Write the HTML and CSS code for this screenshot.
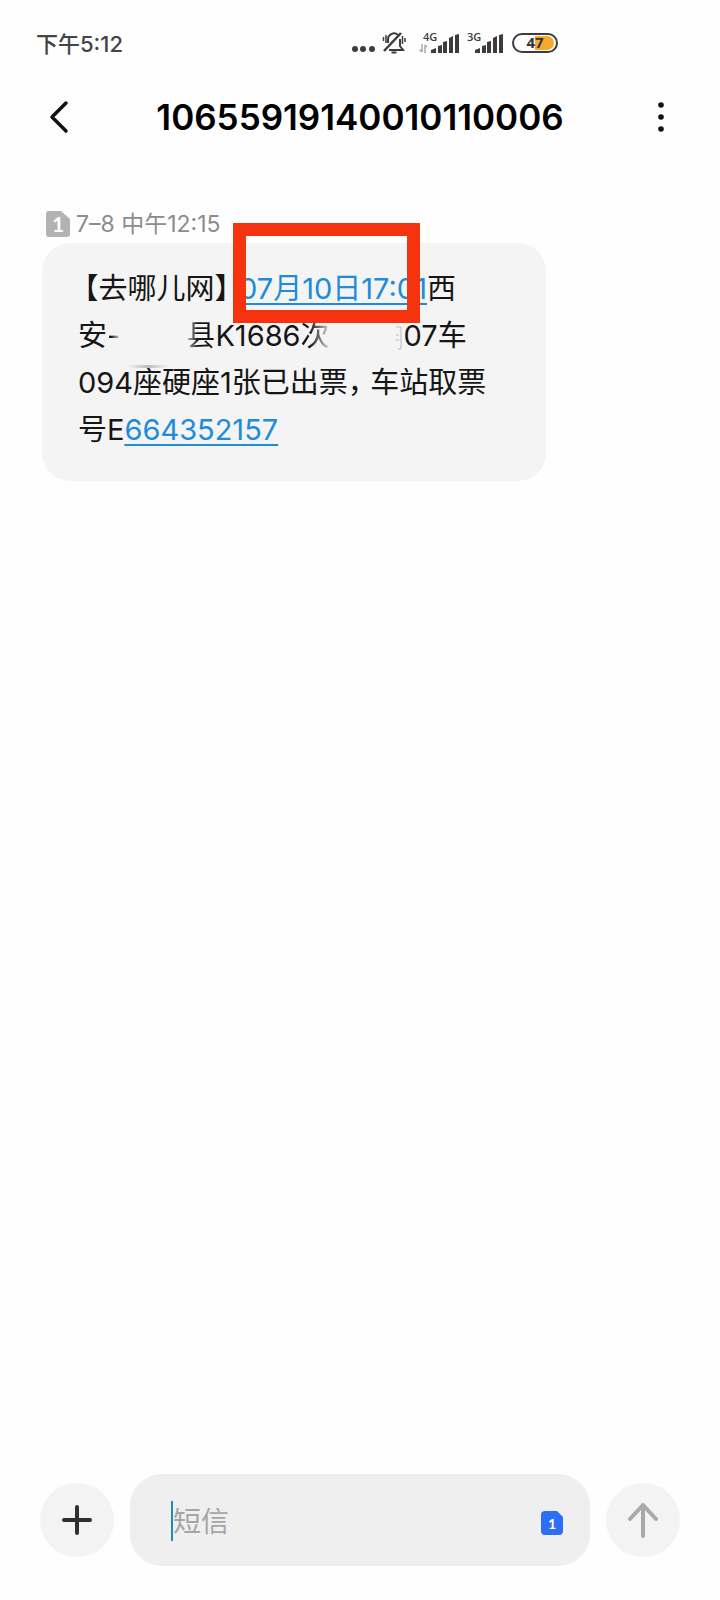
FILE: index.html
```html
<!DOCTYPE html>
<html lang="zh-CN">
<head>
    <meta charset="UTF-8">
    <meta name="viewport" content="width=device-width, initial-scale=1.0">
    <title>短信</title>
    <link rel="stylesheet" href="styles.css">
</head>
<body>
    <div class="status-bar">
        <span class="time">下午5:12</span>
        <div class="status-icons">
            <svg width="24" height="24" viewBox="0 0 24 24" fill="#3c3c3c">
                <circle cx="4" cy="18" r="3"/>
                <circle cx="12" cy="18" r="3"/>
                <circle cx="21" cy="18" r="3"/>
            </svg>
            <svg class="bell" width="24" height="24" viewBox="0 0 24 24" fill="none" stroke="#3c3c3c" stroke-width="2">
                <path d="M6 12V9a6 6 0 0 1 10-5M18 8v7l3 4H7M9.500 21.500h5"/>
                <path d="M2 20 19 2" stroke-width="2.500"/>
                <path d="M1.500 6v4M4 4v8M20.500 5v8M23 7v4" stroke-width="1.500"/>
            </svg>
            <svg class="signal" width="42" height="28" viewBox="0 -2 42 28" fill="#3c3c3c">
                <text x="5" y="10" class="net">4G</text>
                <path d="M4 13v8M1.500 18.500 4 21M7 22v-8M9 16 7 14" fill="none" stroke="#aaa" stroke-width="1.500"/>
                <path d="M13 22v-3l5-2v5zM20 22v-7l4-1v8zM25 22V11l4-1v12zM31 22V7l4-2v17zM37 22V4l4-1v19z"/>
            </svg>
            <svg class="signal" width="42" height="28" viewBox="0 -2 42 28" fill="#3c3c3c">
                <text x="5" y="10" class="net">3G</text>
                <path d="M13 22v-3l5-2v5zM20 22v-7l4-1v8zM25 22V11l4-1v12zM31 22V7l4-2v17zM37 22V4l4-1v19z"/>
            </svg>
            <svg class="battery" width="46" height="24" viewBox="0 0 46 24">
                <path d="M23 5h12a7 7 0 0 1 0 14H23z" fill="#f7a92b"/>
                <rect x="1" y="3" width="44" height="18" rx="9" fill="none" stroke="#3c3c3c" stroke-width="2"/>
                <text x="23" y="17" text-anchor="middle" class="level">47</text>
            </svg>
        </div>
    </div>

    <header class="header">
        <button class="icon-btn" type="button" aria-label="返回">
            <svg width="20" height="32" viewBox="0 0 20 32" fill="none" stroke="#111" stroke-width="3.500" stroke-linecap="round" stroke-linejoin="round">
                <path d="M17 2 3 16l14 14"/>
            </svg>
        </button>
        <h1>10655919140010110006</h1>
        <button class="icon-btn" type="button" aria-label="更多">
            <svg width="8" height="32" viewBox="0 0 8 32" fill="#111">
                <circle cx="4" cy="4" r="2.800"/>
                <circle cx="4" cy="16" r="2.800"/>
                <circle cx="4" cy="28" r="2.800"/>
            </svg>
        </button>
    </header>

    <main class="messages">
        <div class="meta">
            <svg width="24" height="26" viewBox="0 0 24 26">
                <path d="M3 0h12l9 8v15a3 3 0 0 1-3 3H3a3 3 0 0 1-3-3V3a3 3 0 0 1 3-3z" fill="#b3b3b3"/>
                <text x="12" y="21" text-anchor="middle" class="sim-number">1</text>
            </svg>
            <time>7–8 中午12:15</time>
        </div>
        <div class="bubble">
            <p><span class="open">【</span>去哪儿网<span class="close">】</span><a href="#">07月10日17:01</a>西</p>
            <p>安<span class="dash">-</span><span class="gap"></span><span class="fade-left">县</span>K1686<span class="fade-right">次</span><span class="gap"></span><svg class="trace" width="8" height="26" viewBox="0 0 8 26" fill="none" stroke="#bbb"><path d="M0 2h5v22H2M0 10h3M0 15h3"/></svg>07车</p>
            <p>094座硬座1张已出票<span class="comma">，</span>车站取票</p>
            <p>号E<a href="#">664352157</a></p>
            <span class="smear"></span>
            <span class="mark"></span>
        </div>
    </main>

    <form class="composer">
        <button class="round-btn" type="button" aria-label="添加">
            <svg width="32" height="32" viewBox="0 0 32 32" stroke="#303030" stroke-width="4" stroke-linecap="round">
                <path d="M16 3v26M3 16h26"/>
            </svg>
        </button>
        <div class="field">
            <span class="caret"></span>
            <input type="text" placeholder="短信" aria-label="短信">
            <button class="sim-btn" type="button" aria-label="SIM 1">
                <svg width="22" height="24" viewBox="0 0 22 24">
                    <path d="M4 0h12l6 6v14a4 4 0 0 1-4 4H4a4 4 0 0 1-4-4V4a4 4 0 0 1 4-4z" fill="#2c6ef6"/>
                    <text x="11" y="18" text-anchor="middle" class="sim-small">1</text>
                </svg>
            </button>
        </div>
        <button class="round-btn" type="submit" aria-label="发送">
            <svg width="32" height="36" viewBox="0 0 32 36" fill="none" stroke="#a9a9a9" stroke-width="4" stroke-linecap="round" stroke-linejoin="round">
                <path d="M16 34V3M3 17 16 3l13 14"/>
            </svg>
        </button>
    </form>
</body>
</html>
```

FILE: styles.css
```css
* {
    margin: 0;
    padding: 0;
    box-sizing: border-box;
}

body {
    min-height: 100vh;
    display: flex;
    flex-direction: column;
    background: #fefefe;
    color: #161616;
    font-family: Inter, "Noto Sans CJK SC", sans-serif;
}

button,
input {
    border: none;
    background: none;
    font-family: inherit;
}

button {
    display: flex;
    align-items: center;
    justify-content: center;
    cursor: pointer;
}

svg {
    flex: none;
    overflow: visible;
}

.status-bar {
    display: flex;
    align-items: center;
    justify-content: space-between;
    height: 86px;
    padding: 0 162px 0 36px;
}

.time {
    padding-bottom: 3px;
    color: #444;
    font-size: 22px;
    font-weight: 500;
}

.status-icons {
    display: flex;
    align-items: center;
}

.bell {
    margin-left: 7px;
}

.signal {
    margin-left: 12px;
}

.signal + .signal {
    margin-left: 2px;
}

.battery {
    margin-left: 8px;
}

.net {
    font: 600 11px "Open Sans", sans-serif;
}

.level {
    fill: #333;
    font: 700 15px "Open Sans", sans-serif;
}

.header {
    display: flex;
    align-items: center;
    justify-content: space-between;
    height: 62px;
    padding: 0 41px;
}

.header h1 {
    color: #000;
    font-size: 35px;
    font-weight: 600;
    line-height: 44px;
}

.icon-btn {
    width: 36px;
    height: 44px;
}

.messages {
    flex: 1;
    padding: 61px 42px 0;
}

.meta {
    display: flex;
    align-items: center;
    gap: 6px;
    height: 30px;
    margin-bottom: 4px;
    padding-left: 4px;
    color: #8c8c8c;
    font-size: 23px;
    line-height: 28px;
}

.sim-number {
    fill: #fff;
    font: 700 21px Lato, sans-serif;
}

.bubble {
    position: relative;
    width: 504px;
    max-width: 100%;
    padding: 22px 36px 28px;
    border-radius: 28px;
    background: #f4f4f4;
    font-size: 29px;
    line-height: 47px;
}

.bubble p {
    white-space: nowrap;
}

.bubble a {
    color: #218bdb;
    text-decoration: underline;
    text-decoration-thickness: 2px;
    text-underline-offset: 4px;
}

/* half-width punctuation */
.open,
.close,
.comma {
    font-feature-settings: "halt";
}

.open {
    margin-left: 6px;
}

.close {
    margin-right: 10px;
}

.comma {
    margin-right: 8px;
}

.gap {
    display: inline-block;
    width: 66px;
}

.dash,
.fade-right {
    background: linear-gradient(to right, #161616 30%, #d8d8d8);
    background-clip: text;
    color: transparent;
}

.fade-left {
    background: linear-gradient(to right, #d0d0d0, #161616 40%);
    background-clip: text;
    color: transparent;
}

.trace {
    vertical-align: middle;
}

/* leftover of the wiped station name */
.smear {
    position: absolute;
    top: 122px;
    left: 86px;
    width: 40px;
    height: 3px;
    background: linear-gradient(to right, transparent, #bbb 50%, transparent);
}

/* highlight frame round the departure time */
.mark {
    position: absolute;
    top: -20px;
    left: 191px;
    width: 187px;
    height: 100px;
    border: 13px solid #f6330f;
}

.composer {
    display: flex;
    align-items: center;
    gap: 16px;
    padding: 0 40px 34px;
}

.round-btn {
    flex: none;
    width: 74px;
    height: 74px;
    border-radius: 50%;
    background: #f3f3f3;
}

.field {
    flex: 1;
    display: flex;
    align-items: center;
    min-width: 0;
    height: 92px;
    padding: 2px 27px 0 41px;
    border-radius: 32px;
    background: #efefef;
}

.caret {
    width: 2px;
    height: 40px;
    background: #1c8db5;
}

.field input {
    flex: 1;
    min-width: 0;
    padding-top: 2px;
    outline: none;
    font-size: 28px;
    line-height: 40px;
}

.field input::placeholder {
    color: #a6a6a6;
}

.sim-btn {
    margin-top: 4px;
}

.sim-small {
    fill: #fff;
    font: 700 14px Lato, sans-serif;
}
```
